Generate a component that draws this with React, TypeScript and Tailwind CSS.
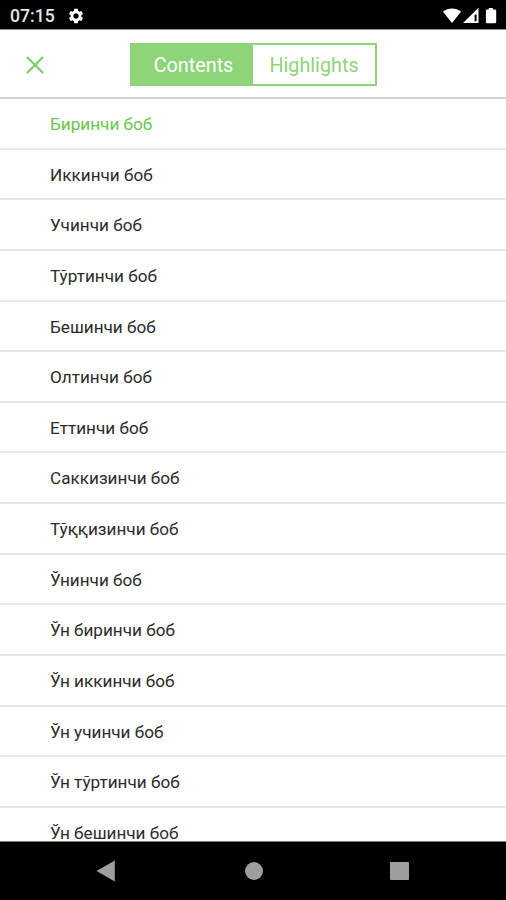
import React, { useState } from "react";
import { MdSettings } from "react-icons/md";
import clsx from "clsx";

const chapters = [
  "Биринчи боб",
  "Иккинчи боб",
  "Учинчи боб",
  "Тўртинчи боб",
  "Бешинчи боб",
  "Олтинчи боб",
  "Еттинчи боб",
  "Саккизинчи боб",
  "Тўққизинчи боб",
  "Ўнинчи боб",
  "Ўн биринчи боб",
  "Ўн иккинчи боб",
  "Ўн учинчи боб",
  "Ўн тўртинчи боб",
  "Ўн бешинчи боб",
];

const StatusBar: React.FC = () => (
  <div className="flex h-[30px] shrink-0 items-center justify-between border-b border-[#8c8c8c] bg-black pt-[2px] pr-[8px] pl-[10px] text-[#e6e6e6]">
    <div className="flex items-center gap-[13px]">
      <span className="w-[44px] pt-[2px] text-[17.6px] leading-none font-medium">07:15</span>
      <MdSettings className="size-[18px] text-white" />
    </div>
    <svg className="h-[18px] w-[56px]" viewBox="0 0 56 18" fill="#fff">
      <path d="M1 4.7C6.2 0.3 13.8 0.3 19 4.7L10 16Z" />
      <path d="M36.5 0.8V16H21Z M32.6 7.4V14.2H34.6V7.4Z" fillRule="evenodd" />
      <path d="M46.7 2.4V1H50.9V2.4H53.1Q54.2 2.4 54.2 3.5V15Q54.2 16.2 53.1 16.2H45Q43.9 16.2 43.9 15V3.5Q43.9 2.4 45 2.4Z" />
    </svg>
  </div>
);

const NavigationBar: React.FC = () => (
  <div className="flex h-[59px] shrink-0 items-center border-t border-[#777] bg-black pl-[96px] text-[#9e9e9e]">
    <button aria-label="Back">
      <svg className="h-[22px] w-[20px]" viewBox="0 0 20 22" fill="currentColor">
        <path d="M0.5 11L18.8 0.6V21.4Z" />
      </svg>
    </button>
    <button aria-label="Home" className="ml-[128.5px] size-[18px] rounded-full bg-[#9e9e9e]" />
    <button aria-label="Recent apps" className="ml-[127.5px] size-[18.5px] rounded-[1px] bg-[#9e9e9e]" />
  </div>
);

const App: React.FC = () => {
  const [tab, setTab] = useState("Contents");
  const [current, setCurrent] = useState(0);

  return (
    <div className="flex h-[900px] w-[506px] flex-col overflow-hidden bg-white font-['Roboto',sans-serif]">
      <StatusBar />
      <div className="flex h-[69px] shrink-0 items-center border-b-2 border-[#d2d2d2] pt-[2px] pl-[26px]">
        <button aria-label="Close">
          <svg className="size-[18px]" viewBox="0 0 18 18" fill="none" stroke="#7acb62" strokeWidth="2">
            <path d="M1 1L17 17M17 1L1 17" />
          </svg>
        </button>
        <div className="ml-[86px] flex h-[43px] w-[247px] border-2 border-[#8ed478] text-[19.8px]">
          {["Contents", "Highlights"].map((name) => (
            <button
              key={name}
              onClick={() => setTab(name)}
              className={clsx(
                "pt-[2px]",
                name === "Contents" ? "w-[121px] pl-[2px]" : "flex-1",
                tab === name ? "bg-[#8ed478] text-white" : "bg-white text-[#8ed478]"
              )}
            >
              {name}
            </button>
          ))}
        </div>
      </div>
      <ul className="min-h-0 flex-1 overflow-hidden">
        {chapters.map((chapter, index) => (
          <li
            key={chapter}
            onClick={() => setCurrent(index)}
            className={clsx(
              "flex h-[50.65px] items-center border-b-2 border-[#e8e8e8] pt-[3px] pl-[50px] text-[17.15px]",
              index === current ? "text-[#66c94a]" : "text-[#2b2b2b]"
            )}
          >
            {chapter}
          </li>
        ))}
      </ul>
      <NavigationBar />
    </div>
  );
};

export default App;
